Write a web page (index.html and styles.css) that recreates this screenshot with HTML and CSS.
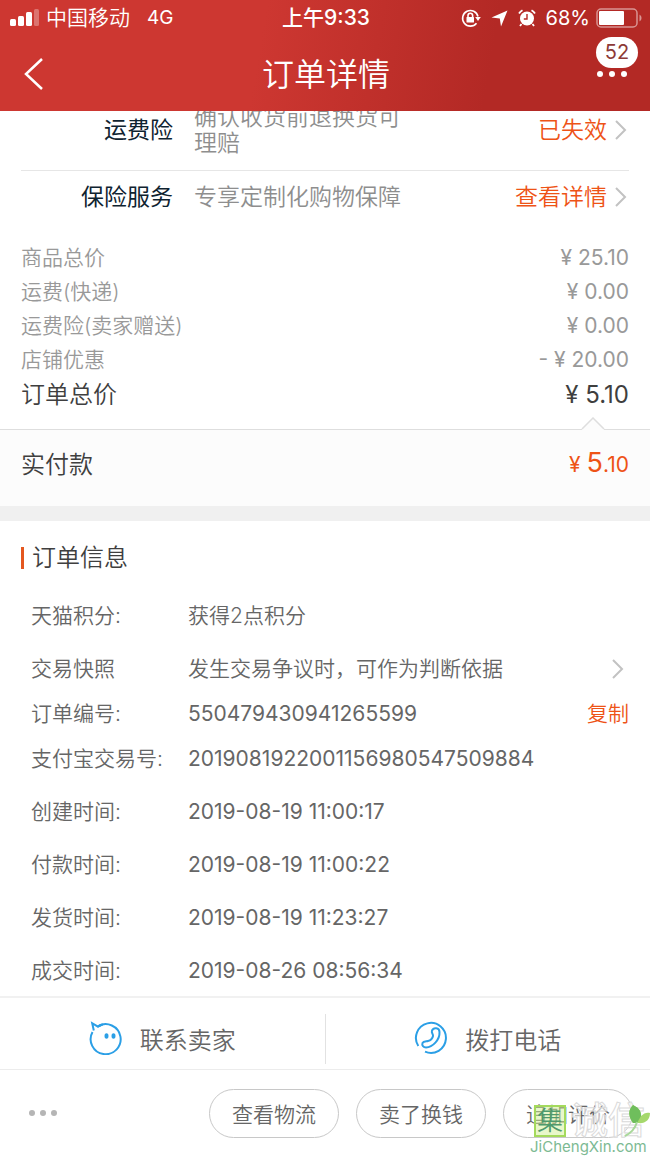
FILE: index.html
```html
<!DOCTYPE html>
<html lang="zh-CN">
<head>
  <meta charset="UTF-8" />
  <meta name="viewport" content="width=device-width, initial-scale=1.0" />
  <title>订单详情</title>
  <link rel="stylesheet" href="styles.css">
</head>
<body>
  <header class="header">
    <div class="status">
      <div class="status-left">
        <svg width="29" height="18" viewBox="0 0 29 18" fill="#fff">
          <rect x="0" y="10" width="6" height="7" rx="1.5" />
          <rect x="8" y="7" width="6" height="10" rx="1.5" />
          <rect x="16" y="3" width="6" height="14" rx="1.5" />
          <rect x="24" y="0" width="5" height="17" rx="1.5" opacity=".3" />
        </svg>
        <span>中国移动</span>
        <span class="network">4G</span>
      </div>
      <span class="clock">上午9:33</span>
      <div class="status-right">
        <svg width="20" height="20" viewBox="0 0 20 20" fill="none" stroke="#fff" stroke-width="1.6">
          <path d="M15.500 15.200A7.800 7.800 0 1 1 17 8.500" />
          <path d="M14.200 9h5.600L17 13z" fill="#fff" stroke="none" />
          <rect x="5.500" y="9" width="7.500" height="5.500" rx=".5" fill="#fff" stroke="none" />
          <path d="M7 9.500V7.500a2.300 2.300 0 0 1 4.600 0v2" />
        </svg>
        <svg width="17" height="17" viewBox="0 0 17 17"><path d="M16.500.500 10 16.500 8.800 8.500.500 7.500z" fill="#fff" /></svg>
        <svg width="18" height="18" viewBox="0 0 18 18" fill="none">
          <circle cx="9" cy="9.500" r="7" fill="#fff" />
          <path d="M1 4.500A10 10 0 0 1 4.500 1.200M17 4.500a10 10 0 0 0-3.500-3.300M3.500 15l-1.500 2M14.500 15l1.500 2" stroke="#fff" stroke-width="1.8" />
          <path d="M9 5v5H5.800" stroke="#b52925" stroke-width="1.4" />
        </svg>
        <span>68%</span>
        <svg width="46" height="20" viewBox="0 0 46 20">
          <rect x="1" y="1" width="40" height="18" rx="4" fill="none" stroke="#fff" stroke-opacity=".5" stroke-width="1.500" />
          <rect x="3" y="3" width="25" height="14" rx="1" fill="#fff" />
          <path d="M43.500 6.500a4 4 0 0 1 0 7z" fill="#fff" opacity=".5" />
        </svg>
      </div>
    </div>
    <div class="nav">
      <button class="back" aria-label="返回">
        <svg width="20" height="32" viewBox="0 0 20 32"><path d="M18 1 2 16l16 15" fill="none" stroke="#fff" stroke-width="2.500" /></svg>
      </button>
      <h1>订单详情</h1>
      <button class="more" aria-label="更多">
        <svg width="32" height="8" viewBox="0 0 32 8" fill="#fff"><circle cx="4" cy="4" r="3" /><circle cx="16" cy="4" r="3" /><circle cx="28" cy="4" r="3" /></svg>
        <span class="badge">52</span>
      </button>
    </div>
  </header>

  <main>
    <section class="services">
      <div class="service tall">
        <span class="service-name">运费险</span>
        <span class="service-desc">确认收货前退换货可理赔</span>
        <a href="#" class="service-link">已失效
          <svg class="arrow" viewBox="0 0 12 20"><path d="m1 1 9 9-9 9" /></svg>
        </a>
      </div>
      <div class="service">
        <span class="service-name">保险服务</span>
        <span class="service-desc">专享定制化购物保障</span>
        <a href="#" class="service-link">查看详情
          <svg class="arrow" viewBox="0 0 12 20"><path d="m1 1 9 9-9 9" /></svg>
        </a>
      </div>
    </section>

    <section class="prices">
      <div class="price"><span>商品总价</span><span class="num">¥ 25.10</span></div>
      <div class="price"><span>运费(快递)</span><span class="num">¥ 0.00</span></div>
      <div class="price"><span>运费险(卖家赠送)</span><span class="num">¥ 0.00</span></div>
      <div class="price"><span>店铺优惠</span><span class="num">- ¥ 20.00</span></div>
      <div class="price total"><span>订单总价</span><span class="num">¥ 5.10</span></div>
    </section>

    <section class="paid">
      <svg class="notch" width="24" height="13" viewBox="0 0 24 13"><path d="M1 12 12 1l11 11v1H1z" fill="#fcfcfc" /><path d="M1 12 12 1l11 11" fill="none" stroke="#dedede" stroke-width="1.500" /></svg>
      <span>实付款</span>
      <span class="amount num">¥ <b>5</b>.10</span>
    </section>

    <section class="info">
      <h2>订单信息</h2>
      <dl>
        <div class="row gap"><dt>天猫积分:</dt><dd>获得2点积分</dd></div>
        <div class="row">
          <dt>交易快照</dt><dd>发生交易争议时，可作为判断依据</dd>
          <svg class="arrow" viewBox="0 0 12 20"><path d="m1 1 9 9-9 9" /></svg>
        </div>
        <div class="row"><dt>订单编号:</dt><dd class="num">550479430941265599</dd><button class="copy">复制</button></div>
        <div class="row gap"><dt>支付宝交易号:</dt><dd class="num">2019081922001156980547509884</dd></div>
        <div class="row gap"><dt>创建时间:</dt><dd class="num">2019-08-19 11:00:17</dd></div>
        <div class="row gap"><dt>付款时间:</dt><dd class="num">2019-08-19 11:00:22</dd></div>
        <div class="row gap"><dt>发货时间:</dt><dd class="num">2019-08-19 11:23:27</dd></div>
        <div class="row"><dt>成交时间:</dt><dd class="num">2019-08-26 08:56:34</dd></div>
      </dl>
    </section>
  </main>

  <footer class="footer">
    <div class="contact">
      <button>
        <svg width="34" height="34" viewBox="0 0 34 34" fill="none" stroke="#2b9fe6" stroke-width="2">
          <path d="M3.500 11A15 15 0 1 0 9 5.300" />
          <path d="M9 5.300A15 15 0 0 1 12.500 3.700" />
          <path d="M4.800 9.500 3.200 2.200l5.800 3.500q3-2 5-2.300" />
          <ellipse cx="17.500" cy="15" rx="2" ry="2.800" fill="#2b9fe6" stroke="none" />
          <ellipse cx="24.500" cy="15" rx="2" ry="2.800" fill="#2b9fe6" stroke="none" />
        </svg>
        联系卖家
      </button>
      <button>
        <svg width="34" height="34" viewBox="0 0 34 34" fill="none" stroke="#2b9fe6" stroke-width="2">
          <path d="M4.300 25A15 15 0 1 1 11 30.700" />
          <path d="M18 9.500c-1 2.500 1.500 3.500 1 5.500-.500 2.500-2.500 4.500-5 5-2 .500-4.500 0-5.500 2-1 2.500 1 4.500 3.500 4.500C18.500 26 26 19 25.500 11c0-4.500-6-5-7.500-1.500z" />
        </svg>
        拨打电话
      </button>
    </div>
    <div class="actions">
      <button class="dots" aria-label="更多操作">
        <svg width="30" height="8" viewBox="0 0 30 8" fill="#b5b5b5"><circle cx="4" cy="4" r="3" /><circle cx="15" cy="4" r="3" /><circle cx="26" cy="4" r="3" /></svg>
      </button>
      <button class="pill">查看物流</button>
      <button class="pill">卖了换钱</button>
      <button class="pill">追加评价</button>
    </div>
    <div class="watermark">
      <div class="mark">
        <span class="seal">集</span>
        <span class="outline">诚信</span>
        <svg class="leaf" width="26" height="34" viewBox="0 0 26 34">
          <path d="M9 19C4 12 4 6 9 1c6 3 8 6 8 11 3-3 6-4 9-3 0 7-5 11-12 10z" fill="#a5d86c" />
          <path d="M9 1c6 3 8 6 8 11l-4 7H9C4 12 4 6 9 1z" fill="#6fbe5c" />
          <path d="M13 18C11 25 7 29 1 32" fill="none" stroke="#a9d89a" stroke-width="2" />
        </svg>
      </div>
      <span class="domain">JiChengXin.com</span>
    </div>
  </footer>
</body>
</html>
```
FILE: styles.css
```css
* {
  box-sizing: border-box;
  padding: 0;
  margin: 0;
}

body {
  font-family: Inter, "Noto Sans CJK SC", sans-serif;
  font-size: 21px;
  font-weight: 350;
  background: #fff;
  color: #666;
  min-height: 100vh;
  display: flex;
  flex-direction: column;
}

button {
  font: inherit;
  color: inherit;
  background: none;
  border: none;
  cursor: pointer;
}

a {
  text-decoration: none;
}

svg {
  flex: none;
}

.num {
  font-weight: 400;
}

/* header */
.header {
  position: sticky;
  top: 0;
  z-index: 2;
  background: linear-gradient(100deg, #cd3731 40%, #b32925 75%);
  color: #fff;
}

.status {
  display: grid;
  grid-template-columns: 1fr auto 1fr;
  align-items: center;
  height: 36px;
  padding: 0 8px 0 10px;
  line-height: 36px;
}

.status-left,
.status-right {
  display: flex;
  align-items: center;
  gap: 7px;
}

.status-right {
  justify-content: flex-end;
  gap: 10px;
  font-size: 20px;
  font-weight: 400;
}

.status-right span {
  margin-right: -4px;
}

.network {
  margin-left: 10px;
  font-size: 19px;
  font-weight: 400;
}

.clock {
  font-weight: 500;
}

.nav {
  display: flex;
  align-items: center;
  justify-content: space-between;
  height: 75px;
  padding: 0 22px 0 24px;
}

.back,
.more {
  display: flex;
  width: 34px;
}

.more {
  position: relative;
  justify-content: flex-end;
}

.nav h1 {
  padding-bottom: 4px;
  font-size: 32px;
  font-weight: 350;
}

.badge {
  position: absolute;
  right: -10px;
  bottom: 10px;
  width: 42px;
  border-radius: 16px;
  background: #fff;
  color: #8d3a37;
  font-size: 20px;
  font-weight: 400;
  line-height: 31px;
  text-align: center;
}

/* the list is scrolled a little under the header */
main {
  flex: 1;
  margin-top: -21px;
}

.services {
  padding: 0 21px;
}

.service {
  display: flex;
  align-items: center;
  height: 52px;
  font-size: 23px;
  line-height: 26px;
}

.service.tall {
  height: 81px;
  border-bottom: 1px solid #e6e6e6;
}

.service-name {
  width: 152px;
  margin-right: 21px;
  color: #0f2330;
  font-weight: 400;
  text-align: right;
}

.service-desc {
  width: 214px;
  color: #8e8e8e;
}

.service-link {
  display: flex;
  align-items: center;
  gap: 8px;
  margin-left: auto;
  color: #ee5316;
}

.arrow {
  width: 12px;
  height: 20px;
  margin-right: 2px;
  fill: none;
  stroke: #c2c2c2;
  stroke-width: 2;
}

.prices {
  padding: 18px 21px 16px;
}

.price {
  display: flex;
  justify-content: space-between;
  line-height: 34px;
  color: #999;
}

.price.total {
  font-size: 24px;
  line-height: 36px;
  color: #3f3f3f;
}

.paid {
  position: relative;
  display: flex;
  justify-content: space-between;
  padding: 0 21px 6px;
  border-top: 1px solid #dedede;
  border-bottom: 15px solid #f0f0f0;
  background: #fcfcfc;
  color: #3f3f3f;
  font-size: 24px;
  line-height: 70px;
}

.notch {
  position: absolute;
  top: -13px;
  right: 45px;
}

.amount {
  color: #ee5316;
  font-size: 21px;
}

.amount b {
  font-size: 27px;
  font-weight: 400;
  line-height: 1;
}

/* order info */
.info {
  padding: 19px 21px 3px;
}

.info h2 {
  display: flex;
  align-items: center;
  gap: 8px;
  margin-bottom: 17px;
  color: #3f3f3f;
  font-size: 24px;
  font-weight: 350;
  line-height: 36px;
}

.info h2::before {
  content: "";
  width: 3px;
  height: 22px;
  background: #e4571f;
}

.row {
  display: flex;
  align-items: center;
  padding-left: 10px;
  line-height: 45px;
}

.row.gap {
  margin-bottom: 8px;
}

.row dt {
  width: 157px;
}

.row dd {
  flex: 1;
  white-space: nowrap;
}

.row .arrow {
  margin-right: 5px;
}

.copy {
  color: #ee5316;
}

/* footer */
.footer {
  position: sticky;
  bottom: 0;
  background: #fff;
}

.contact {
  display: flex;
  border-top: 2px solid #f1f1f1;
  border-bottom: 1px solid #ececec;
  padding: 16px 0 5px;
}

.contact button {
  flex: 1;
  display: flex;
  align-items: center;
  justify-content: center;
  gap: 17px;
  height: 50px;
  padding-bottom: 2px;
  font-size: 24px;
}

.contact button + button {
  border-left: 1px solid #e2e2e2;
}

.actions {
  display: flex;
  align-items: center;
  gap: 17px;
  height: 86px;
  padding: 0 17px 0 28px;
}

.dots {
  display: flex;
  margin-right: auto;
}

.pill {
  width: 130px;
  height: 49px;
  border: 1px solid #c8c8c8;
  border-radius: 25px;
}

.watermark {
  position: absolute;
  right: 0;
  bottom: 0;
  width: 120px;
  pointer-events: none;
}

.mark {
  position: relative;
  display: flex;
  align-items: center;
  gap: 5px;
  height: 34px;
  padding-left: 4px;
}

.seal {
  width: 32px;
  border: 2px solid #a4da5c;
  background: rgba(210, 240, 150, 0.5);
  color: #4f9a6c;
  font-size: 26px;
  line-height: 28px;
  text-align: center;
}

.outline {
  color: rgba(255, 255, 255, 0.6);
  font-size: 37px;
  font-weight: 500;
  line-height: 34px;
  white-space: nowrap;
  -webkit-text-stroke: 1px #dadada;
}

.leaf {
  position: absolute;
  top: 0;
  right: 0;
}

.domain {
  display: block;
  color: #7dba93;
  font-size: 15px;
  font-weight: 400;
  line-height: 18px;
}
```
